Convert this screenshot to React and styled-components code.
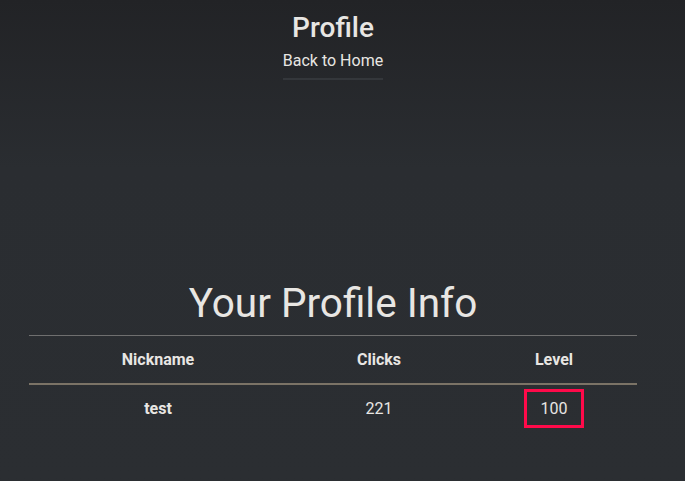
import React from "react";
import styled, { createGlobalStyle } from "styled-components";

const Global = createGlobalStyle`
  html, body { margin: 0; padding: 0; }
  body {
    min-height: 481px;
    background: linear-gradient(180deg, #222326 0%, #2a2d31 35%, #2b2e32 100%);
    color: #e8e6e3;
    font-family: Roboto, "Liberation Sans", sans-serif;
  }
`;

const Page = styled.div`
  width: 666px;
  display: flex;
  flex-direction: column;
  align-items: center;
`;

const Header = styled.header`
  display: flex;
  flex-direction: column;
  align-items: center;
  padding-top: 11px;
`;

const Title = styled.h1`
  margin: 0;
  font-size: 28px;
  font-weight: 500;
  line-height: 34px;
`;

const HomeLink = styled.a`
  margin-top: 5px;
  font-size: 16px;
  line-height: 22px;
  color: #e8e6e3;
  text-decoration: none;
  padding-bottom: 6px;
  border-bottom: 2px solid #34373b;
`;

const Section = styled.section`
  margin-top: 199px;
  width: 608px;
  display: flex;
  flex-direction: column;
  align-items: center;
`;

const Heading = styled.h2`
  margin: 0 0 8px;
  font-size: 40.5px;
  font-weight: 400;
  line-height: 48px;
`;

const Table = styled.table`
  width: 100%;
  border-collapse: collapse;
  font-size: 16px;
`;

const Th = styled.th`
  width: ${(p) => p.$w}px;
  border-top: 1px solid #6f6f6f;
  border-bottom: 2px solid #7b7366;
  padding: 0;
  height: 47px;
  font-weight: 700;
  text-align: center;
`;

const Td = styled.td`
  padding: 4px 0 8px;
  line-height: 39px;
  vertical-align: top;
  text-align: center;
  font-weight: ${(p) => (p.$bold ? 700 : 400)};
`;

const Highlight = styled.span`
  display: inline-block;
  vertical-align: top;
  width: 54px;
  height: 33px;
  line-height: 33px;
  border: 3px solid #ff0a4a;
`;

export default function App() {
  return (
    <Page>
      <Global />
      <Header>
        <Title>Profile</Title>
        <HomeLink href="#">Back to Home</HomeLink>
      </Header>
      <Section>
        <Heading>Your Profile Info</Heading>
        <Table>
          <thead>
            <tr>
              <Th $w={258}>Nickname</Th>
              <Th $w={184}>Clicks</Th>
              <Th $w={166}>Level</Th>
            </tr>
          </thead>
          <tbody>
            <tr>
              <Td $bold>test</Td>
              <Td>221</Td>
              <Td>
                <Highlight>100</Highlight>
              </Td>
            </tr>
          </tbody>
        </Table>
      </Section>
    </Page>
  );
}
